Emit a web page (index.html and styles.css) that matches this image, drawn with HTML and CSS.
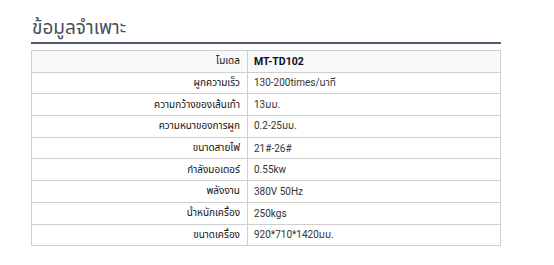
FILE: index.html
```html
<!DOCTYPE html>
<html lang="th">
<head>
<meta charset="utf-8">
<link rel="stylesheet" href="styles.css">
</head>
<body>
<section class="spec">
  <h2 class="spec-title">ข้อมูลจำเพาะ</h2>
  <table class="spec-table">
    <tbody>
      <tr class="head"><th>โมเดล</th><td><strong>MT-TD102</strong></td></tr>
      <tr><th>ผูกความเร็ว</th><td>130-200times/นาที</td></tr>
      <tr><th>ความกว้างของเส้นเท้า</th><td>13มม.</td></tr>
      <tr><th>ความหนาของการผูก</th><td>0.2-25มม.</td></tr>
      <tr><th>ขนาดสายไฟ</th><td>21#-26#</td></tr>
      <tr><th>กำลังมอเตอร์</th><td>0.55kw</td></tr>
      <tr><th>พลังงาน</th><td>380V 50Hz</td></tr>
      <tr><th>น้ำหนักเครื่อง</th><td>250kgs</td></tr>
      <tr><th>ขนาดเครื่อง</th><td>920*710*1420มม.</td></tr>
    </tbody>
  </table>
  <p class="after">คุณสมบัติเด่น</p>
</section>
</body>
</html>
```

FILE: styles.css
```css
html, body {
  margin: 0;
  padding: 0;
  background: #ffffff;
}
body {
  font-family: Roboto, "Noto Sans", "Noto Sans Thai", sans-serif;
  color: #222;
  overflow: hidden;
}
.spec {
  width: 470px;
  margin-left: 31px;
  padding-top: 15px;
}
.spec-title {
  margin: 0;
  font-size: 19px;
  font-weight: 400;
  line-height: 26px;
  color: #4a4f57;
  padding-left: 1px;
  border-bottom: 2px solid #4f5b6e;
  padding-bottom: 1px;
}
.spec-table {
  margin-top: 6px;
  width: 100%;
  border-collapse: collapse;
  font-size: 10px;
}
.spec-table th,
.spec-table td {
  border: 1px solid #cfcfcf;
  height: 20.7px;
  padding: 0 7px 0 6px;
  vertical-align: middle;
}
.spec-table th {
  width: 202px;
  text-align: right;
  font-weight: 400;
  color: #111;
}
.spec-table td {
  color: #333;
}
.spec-table strong {
  font-weight: 700;
  color: #111;
  font-size: 10.5px;
}
.spec-table tr.head th,
.spec-table tr.head td {
  background: #f8f9fa;
}
.after {
  margin: 19px 0 0 64px;
  font-size: 13px;
  line-height: 18px;
  color: #333;
}
```
